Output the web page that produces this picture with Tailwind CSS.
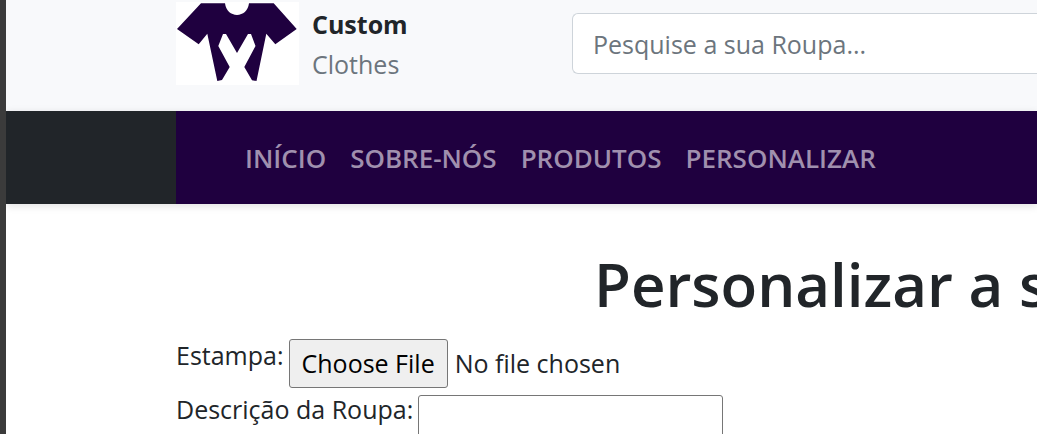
<!DOCTYPE html>
<html lang="pt">
<head>
<meta charset="utf-8">
<meta name="viewport" content="width=device-width, initial-scale=1">
<title>Custom Clothes</title>
<script src="https://cdn.jsdelivr.net/npm/@tailwindcss/browser@4"></script>
</head>
<body class="min-h-screen overflow-hidden border-l-6 border-[#3b3b3b] bg-white font-['Segoe_UI','Open_Sans',sans-serif] text-[25px] leading-10 text-[#212529]">
<header class="flex items-start bg-[#f8f9fb] pl-[170px] pb-[26px]">
  <a href="#" class="flex w-[396px] shrink-0 items-start gap-[13px]">
    <svg class="mt-0.5 h-[83px] w-[123px] shrink-0 bg-white" viewBox="0 0 123 83" role="img" aria-label="Custom Clothes">
      <path fill="#1f003f" d="M25 1.3H49C50 9 55 12.9 61 12.9S72 9 73 1.3H97.7L120.7 27L99.3 42.2L90.3 31.7L80.5 79L76 78.2L68.3 65L79.5 44L75 32H72L61 51L50 32H47L42.3 44L53.7 65L46 78L41.3 79L31.3 31.7L22.7 42.2L1 27Z"/>
    </svg>
    <span class="flex flex-col pt-1">
      <strong class="font-bold">Custom</strong>
      <span class="text-[#6c757d]">Clothes</span>
    </span>
  </a>
  <form class="mt-[13px] min-w-0 flex-1">
    <input type="search" aria-label="Pesquise a sua Roupa" placeholder="Pesquise a sua Roupa..." class="block h-[61px] w-full rounded-l-md border border-r-0 border-[#ced4da] bg-white px-5 placeholder:text-[#6c757d]">
  </form>
</header>
<nav class="flex bg-[#212529] pl-[170px] shadow-[0_2px_8px_rgba(0,0,0,0.12)]">
  <ul class="flex flex-1 gap-6 bg-[#1f003f] pt-[27px] pr-6 pb-[26px] pl-[69px] text-[26px] font-semibold text-[#a090ae]">
    <li><a href="#">INÍCIO</a></li>
    <li><a href="#">SOBRE-NÓS</a></li>
    <li><a href="#">PRODUTOS</a></li>
    <li><a href="#">PERSONALIZAR</a></li>
  </ul>
</nav>
<main class="pt-10 pl-[170px]">
  <h1 class="overflow-hidden pl-[418px] text-[60px] leading-[80px] font-semibold whitespace-nowrap">Personalizar a sua</h1>
  <form class="mt-[15px] flex flex-col gap-[7px]">
    <div class="flex items-start gap-[5px]">
      <label for="estampa" class="-mt-1">Estampa:</label>
      <input id="estampa" type="file" class="h-[49px] leading-[47px] file:mr-[7px] file:h-[49px] file:rounded-[3px] file:border file:border-solid file:border-[#767676] file:bg-[#efefef] file:px-3 file:text-black">
    </div>
    <div class="flex items-start gap-[5px]">
      <label for="descricao" class="-mt-1.5">Descrição da Roupa:</label>
      <input id="descricao" type="text" class="h-[49px] w-[305px] rounded-[3px] border border-[#767676] bg-white px-1">
    </div>
  </form>
</main>
</body>
</html>
